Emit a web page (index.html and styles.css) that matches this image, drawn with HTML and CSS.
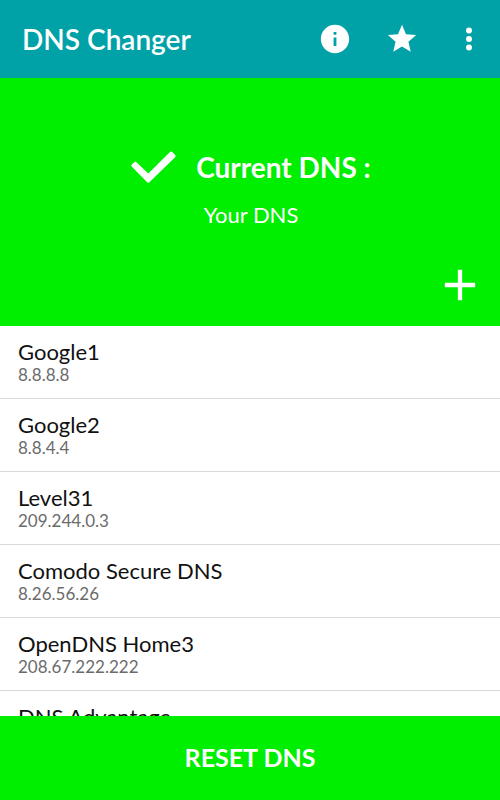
FILE: index.html
```
<!DOCTYPE html>
<html lang="en">
<head>
  <meta charset="UTF-8" />
  <meta name="viewport" content="width=device-width, initial-scale=1" />
  <title>DNS Changer</title>
  <link rel="stylesheet" href="styles.css">
</head>
<body>
  <header class="toolbar">
    <h1>DNS Changer</h1>
    <button class="icon-btn" aria-label="Info">
      <svg viewBox="0 0 24 24"><path d="M12 2C6.480 2 2 6.480 2 12s4.480 10 10 10 10-4.480 10-10S17.520 2 12 2zm1 15h-2v-6h2v6zm0-8h-2V7h2v2z"/></svg>
    </button>
    <button class="icon-btn" aria-label="Rate">
      <svg viewBox="0 0 24 24"><path d="M12 17.270L18.180 21l-1.640-7.030L22 9.240l-7.190-.61L12 2 9.190 8.630 2 9.240l5.460 4.730L5.820 21z"/></svg>
    </button>
    <button class="icon-btn" aria-label="More options">
      <svg viewBox="0 0 24 24"><circle cx="12" cy="6" r="2.100"/><circle cx="12" cy="12" r="2.100"/><circle cx="12" cy="18" r="2.100"/></svg>
    </button>
  </header>

  <section class="current">
    <div class="current-head">
      <svg class="check" viewBox="0 0 45 33"><path d="M5.400 11.200Q4.300 10.200 3.200 11.200L.9 13.500Q-.2 14.600.9 15.700L16.200 31.200Q17.300 32.200 18.400 31.200L44.100 6.200Q45.200 5 44.100 3.900L41.300 1Q40.100 0 39 1L17.300 22.400z"/></svg>
      <h2>Current DNS :</h2>
    </div>
    <p class="current-name">Your DNS</p>
    <button class="add-btn" aria-label="Add DNS">
      <svg viewBox="0 0 24 24"><path d="M19 13h-6v6h-2v-6H5v-2h6V5h2v6h6v2z"/></svg>
    </button>
  </section>

  <ul class="dns-list">
    <li><button class="dns-row"><span class="dns-name">Google1</span><span class="dns-ip">8.8.8.8</span></button></li>
    <li><button class="dns-row"><span class="dns-name">Google2</span><span class="dns-ip">8.8.4.4</span></button></li>
    <li><button class="dns-row"><span class="dns-name">Level31</span><span class="dns-ip">209.244.0.3</span></button></li>
    <li><button class="dns-row"><span class="dns-name">Comodo Secure DNS</span><span class="dns-ip">8.26.56.26</span></button></li>
    <li><button class="dns-row"><span class="dns-name">OpenDNS Home3</span><span class="dns-ip">208.67.222.222</span></button></li>
    <li><button class="dns-row"><span class="dns-name">DNS Advantage</span></button></li>
  </ul>

  <button class="reset-btn">RESET DNS</button>
</body>
</html>
```
FILE: styles.css
```
* {
  box-sizing: border-box;
}
body {
  display: flex;
  flex-direction: column;
  height: 100vh;
  margin: 0;
  background: #fff;
  color: #111;
  font-family: Lato, sans-serif;
}
h1, h2, p, ul {
  margin: 0;
  padding: 0;
}
button {
  padding: 0;
  border: 0;
  background: none;
  color: inherit;
  font-family: inherit;
  cursor: pointer;
}
svg {
  display: block;
  fill: #fff;
}

/* top bar */
.toolbar {
  display: flex;
  flex-shrink: 0;
  align-items: center;
  gap: 33px;
  padding: 22px 14px 22px 22px;
  background: #00a2a7;
  color: #fff;
}
.toolbar h1 {
  flex: 1;
  font-size: 28px;
  font-weight: 600;
  line-height: 34px;
}
.icon-btn svg {
  width: 34px;
  height: 34px;
}

/* current server */
.current {
  display: flex;
  flex-direction: column;
  flex-shrink: 0;
  align-items: center;
  padding: 68px 14px 15px 16px;
  background: #00ee00;
  color: #fff;
}
.current-head {
  display: flex;
  align-items: center;
  gap: 20px;
}
.check {
  width: 45px;
  height: 33px;
}
.current-head h2 {
  font-size: 28px;
  font-weight: 700;
  line-height: 42px;
}
.current-name {
  margin-top: 13px;
  font-size: 22px;
  line-height: 28px;
}
.add-btn {
  align-self: flex-end;
  margin-top: 30px;
}
.add-btn svg {
  width: 52px;
  height: 52px;
}

/* server list */
.dns-list {
  flex: 1;
  min-height: 0;
  overflow: hidden;
  list-style: none;
}
.dns-row {
  display: block;
  width: 100%;
  padding: 13px 18px;
  border-bottom: 1px solid #d9d9d9;
  text-align: left;
}
.dns-name, .dns-ip {
  display: block;
}
.dns-name {
  font-size: 22px;
  line-height: 26px;
}
.dns-ip {
  color: #6b6b6b;
  font-size: 17px;
  line-height: 20px;
}

.reset-btn {
  flex-shrink: 0;
  padding: 26px 0 28px;
  background: #00ee00;
  color: #fff;
  font-size: 25px;
  font-weight: 700;
  line-height: 30px;
}
```
